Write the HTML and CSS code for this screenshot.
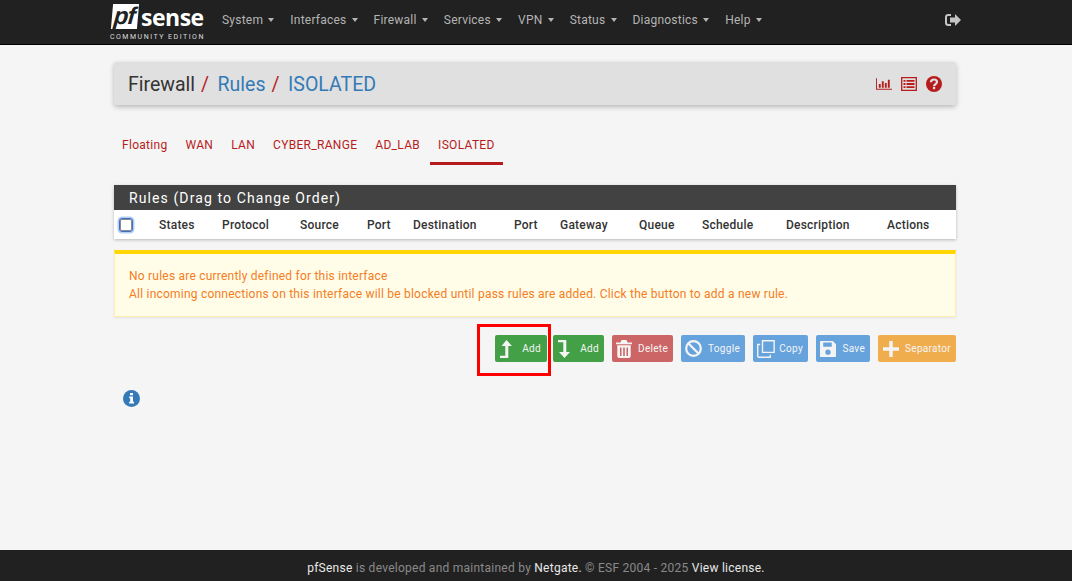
FILE: index.html
```html
<!DOCTYPE html>
<html lang="en">
<head>
  <meta charset="UTF-8" />
  <title>pfSense - Firewall: Rules: ISOLATED</title>
  <link rel="stylesheet" href="styles.css">
</head>
<body>
  <nav class="topbar">
    <div class="wrap topbar-inner">
      <div class="logo">
        <div class="logo-mark"><span class="logo-pf">pf</span><span class="logo-sense">sense</span></div>
        <div class="logo-sub">COMMUNITY EDITION</div>
      </div>
      <ul class="menu">
        <li>System <i class="caret"></i></li>
        <li>Interfaces <i class="caret"></i></li>
        <li>Firewall <i class="caret"></i></li>
        <li>Services <i class="caret"></i></li>
        <li>VPN <i class="caret"></i></li>
        <li>Status <i class="caret"></i></li>
        <li>Diagnostics <i class="caret"></i></li>
        <li>Help <i class="caret"></i></li>
      </ul>
      <svg class="logout" viewBox="0 0 16 14"><path fill="currentColor" d="M6 1v2H3.200C2.500 3 2 3.500 2 4.200v5.600C2 10.500 2.500 11 3.200 11H6v2H3C1.300 13 0 11.700 0 10V4c0-1.700 1.300-3 3-3zM10 1l6 6-6 6V9.500H5v-5h5z"/></svg>
    </div>
  </nav>

  <main class="wrap">
    <header class="crumbs">
      <h1>
        <span>Firewall</span><em>/</em><a>Rules</a><em>/</em><a>ISOLATED</a>
      </h1>
      <div class="crumb-icons">
        <svg width="16" height="14" viewBox="0 0 17 14"><path fill="currentColor" d="M0 1h1v11h16v1.200H0zM3 7h2v4H3zM6.200 4h2v7h-2zM9.400 6h2v5h-2zM12.600 2.500h2V11h-2z"/></svg>
        <svg width="16" height="14" viewBox="0 0 16 14"><path fill="none" stroke="currentColor" stroke-width="1.300" d="M.7.700h14.600v12.600H.7z"/><path fill="currentColor" d="M2.500 3h2v1.800h-2zM5.500 3h8v1.800h-8zM2.500 6.100h2v1.800h-2zM5.500 6.100h8v1.800h-8zM2.500 9.200h2V11h-2zM5.500 9.200h8V11h-8z"/></svg>
        <svg width="16" height="16" viewBox="0 0 16 16"><circle cx="8" cy="8" r="8" fill="currentColor"/><path fill="none" stroke="#e0e0e0" stroke-width="2.200" d="M4.900 6.200C5 4.400 6.300 3.500 8 3.500c1.700 0 3 1 3 2.500 0 2.100-3 2-3 4.200"/><path fill="#e0e0e0" d="M6.900 11h2.300v2.200H6.900z"/></svg>
      </div>
    </header>

    <ul class="tabs">
      <li>Floating</li>
      <li>WAN</li>
      <li>LAN</li>
      <li>CYBER_RANGE</li>
      <li>AD_LAB</li>
      <li class="active">ISOLATED</li>
    </ul>

    <section class="panel">
      <h2>Rules (Drag to Change Order)</h2>
      <div class="rule-head">
        <span><input type="checkbox" class="check-all"></span>
        <span>States</span>
        <span>Protocol</span>
        <span>Source</span>
        <span>Port</span>
        <span>Destination</span>
        <span>Port</span>
        <span>Gateway</span>
        <span>Queue</span>
        <span>Schedule</span>
        <span>Description</span>
        <span>Actions</span>
      </div>
    </section>

    <div class="notice">
      No rules are currently defined for this interface<br>
      All incoming connections on this interface will be blocked until pass rules are added. Click the button to add a new rule.
    </div>

    <div class="actions">
      <button class="btn green first">
        <svg viewBox="0 0 14 18" width="14" height="18"><path fill="currentColor" d="M7.500 0L13 6H9.300v12H1v-2.200h5.300V6H2.500z"/></svg>
        Add
        <span class="highlight"></span>
      </button>
      <button class="btn green second">
        <svg viewBox="0 0 14 18" width="14" height="18"><path fill="currentColor" d="M1 0h8.300v12H13l-5.500 6L2 12h4.300V2.200H1z"/></svg>
        Add
      </button>
      <button class="btn red">
        <svg viewBox="0 0 16 18" width="16" height="18"><path fill="currentColor" d="M5.500 0h5l1 2.500H16v1.700H0V2.500h4.500zM1.300 5.200h13.400V16c0 1.100-.9 2-2 2H3.300c-1.100 0-2-.9-2-2zM4 7.500V16h1.500V7.500zM7.200 7.500V16h1.600V7.500zM10.500 7.500V16H12V7.500z"/></svg>
        Delete
      </button>
      <button class="btn blue">
        <svg viewBox="0 0 17 17" width="17" height="17"><circle cx="8.500" cy="8.500" r="7.300" fill="none" stroke="currentColor" stroke-width="2.200"/><path stroke="currentColor" stroke-width="2.200" d="M3.500 3.500l10 10"/></svg>
        Toggle
      </button>
      <button class="btn blue">
        <svg viewBox="0 0 17 17" width="18" height="18"><path fill="none" stroke="currentColor" stroke-width="1.300" d="M5.200.7h11v11h-11zM3 4.200H.7v11c0 .6.500 1.100 1.100 1.100H12.500V14"/></svg>
        Copy
      </button>
      <button class="btn blue">
        <svg viewBox="0 0 15 15" width="16" height="16"><path fill="currentColor" fill-rule="evenodd" d="M1 0h11l3 3v11c0 .6-.4 1-1 1H1c-.6 0-1-.4-1-1V1c0-.6.400-1 1-1zM3 1.500v4h8v-4zM7.500 8a2.500 2.500 0 100 5 2.500 2.500 0 000-5z"/></svg>
        Save
      </button>
      <button class="btn orange">
        <svg viewBox="0 0 14 14" width="16" height="16"><path fill="currentColor" d="M5.500 0h3v5.500H14v3H8.500V14h-3V8.500H0v-3h5.500z"/></svg>
        Separator
      </button>
    </div>

    <div class="info">
      <svg width="17" height="17" viewBox="0 0 17 17"><circle cx="8.500" cy="8.500" r="8.500" fill="#337ab7"/><path fill="#fff" d="M7 3h3v2.200H7zM6.200 6.500h3.800v5.200h1v1.800H6.200v-1.800h1V8.300h-1z"/></svg>
    </div>
  </main>

  <footer class="footer">
    <b>pfSense</b> is developed and maintained by <b>Netgate.</b> © ESF 2004 - 2025 <b>View license.</b>
  </footer>
</body>
</html>
```

FILE: styles.css
```css
* {
  box-sizing: border-box;
}

body {
  background: #f5f5f5;
  color: #333;
  font-family: Roboto, "Liberation Sans", sans-serif;
  font-size: 12px;
  letter-spacing: .22px;
  margin: 0;
  height: 581px;
  display: flex;
  flex-direction: column;
  overflow: hidden;
}

.wrap {
  width: 842px;
  margin-left: 114px;
}

/* top bar */
.topbar {
  background: #212121;
  height: 45px;
  border-bottom: 1px solid #000;
  flex: none;
}

.topbar-inner {
  display: flex;
  align-items: flex-start;
  width: 851px;
  margin-left: 110px;
}

.logo {
  width: 112px;
  color: #fff;
  padding-top: 3px;
}

.logo-mark {
  display: flex;
  align-items: center;
  height: 27px;
}

.logo-pf {
  background: #fff;
  color: #212121;
  font: italic 700 24px/23px "Liberation Sans", sans-serif;
  width: 26px;
  height: 25px;
  margin-left: 2px;
  padding-left: 2px;
  letter-spacing: -1px;
  transform: skewX(-5deg);
}

.logo-sense {
  font: 700 23px/26px "Open Sans", sans-serif;
  margin-left: 3px;
  letter-spacing: -.5px;
}

.logo-sub {
  font-size: 7px;
  letter-spacing: 1.500px;
  color: #ddd;
  line-height: 8px;
  margin-top: 3px;
  white-space: nowrap;
}

.menu {
  list-style: none;
  display: flex;
  gap: 16px;
  margin: 0;
  padding: 12px 0 0;
  line-height: 16px;
  color: #b4b4b4;
}

.caret {
  display: inline-block;
  border-top: 4px solid #b4b4b4;
  border-left: 3.500px solid transparent;
  border-right: 3.500px solid transparent;
  margin-left: 2px;
  vertical-align: 2px;
}

.logout {
  width: 16px;
  height: 14px;
  color: #c4c4c4;
  margin: 13px 0 0 auto;
}

/* page title */
.crumbs {
  display: flex;
  align-items: center;
  justify-content: space-between;
  height: 43px;
  margin-top: 17px;
  padding: 0 14px;
  background: #e0e0e0;
  border-radius: 2px;
  box-shadow: 0 2px 5px rgba(0, 0, 0, .25);
}

.crumbs h1 {
  font-size: 19.500px;
  font-weight: 400;
  letter-spacing: 0;
  margin: 0;
  padding-top: 1px;
}

.crumbs em {
  color: #b71c1c;
  font-style: normal;
  margin: 0 8.500px 0 6px;
}

.crumbs a {
  color: #337ab7;
}

.crumb-icons {
  display: flex;
  align-items: center;
  gap: 9px;
  color: #b71c1c;
}

/* tabs */
.tabs {
  list-style: none;
  display: flex;
  margin: 18px 0 0;
  padding: 0;
  color: #b71c1c;
  letter-spacing: .3px;
  height: 42px;
}

.tabs li {
  padding: 0 8px;
  margin-right: 2px;
  line-height: 44px;
}

.tabs li.active {
  border-bottom: 3px solid #b71c1c;
}

/* rules panel */
.panel {
  margin-top: 20px;
  background: #fff;
  box-shadow: 0 1px 3px rgba(0, 0, 0, .25);
}

.panel h2 {
  margin: 0;
  background: #424242;
  color: #fff;
  font-size: 14px;
  font-weight: 400;
  letter-spacing: 1.100px;
  line-height: 27px;
  height: 25px;
  padding-left: 15px;
}

.rule-head {
  display: grid;
  grid-template-columns: 45px 63px 78px 67px 46px 101px 46px 79px 63px 84px 101px 1fr;
  height: 29px;
  align-items: center;
  font-weight: 500;
  color: #333;
}

.check-all {
  width: 14px;
  height: 14px;
  margin: 0 0 0 5px;
  display: block;
  appearance: none;
  background: #fff;
  border: 1px solid #3f6fc0;
  border-radius: 3px;
  box-shadow: 0 0 0 1.500px #b4d0f5, inset 0 0 0 1px #8a8a8a;
}

/* notice */
.notice {
  margin-top: 11px;
  background: #fffde7;
  border: 1px solid #ffeeb0;
  border-top: 4px solid #ffd600;
  color: #f57c1f;
  line-height: 18px;
  height: 67px;
  padding: 13px 14px 0;
  box-shadow: 0 1px 2px rgba(0, 0, 0, .08);
}

/* buttons */
.actions {
  display: flex;
  justify-content: flex-end;
  gap: 8px;
  margin-top: 18px;
}

.btn {
  position: relative;
  display: flex;
  align-items: center;
  justify-content: space-between;
  height: 27px;
  border-radius: 2px;
  border: 1px solid transparent;
  color: #f4f4f4;
  font: 400 10px Roboto, sans-serif;
  letter-spacing: .3px;
  padding: 0 4px 0 3px;
}

.green { background: #43a047; }
.red { background: #cc6666; width: 61px; }
.blue { background: #66a3dd; }
.orange { background: #f0ad4e; width: 78px; padding-left: 4px; }

.first { width: 52px; margin-right: -2px; padding-right: 5px; }
.second { width: 51px; }
.blue:nth-of-type(4) { width: 64px; }
.blue:nth-of-type(5) { width: 55px; }
.blue:nth-of-type(6) { width: 54px; }

.highlight {
  position: absolute;
  left: -19px;
  top: -12px;
  width: 74px;
  height: 52px;
  border: 3px solid #f00;
}

.info {
  margin: 28px 0 0 9px;
  height: 17px;
}

.footer {
  margin-top: auto;
  height: 31px;
  background: #212121;
  color: #8a8a8a;
  letter-spacing: .25px;
  line-height: 36px;
  text-align: center;
  flex: none;
}

.footer b {
  font-weight: 400;
  color: #e8e8e8;
}
```
